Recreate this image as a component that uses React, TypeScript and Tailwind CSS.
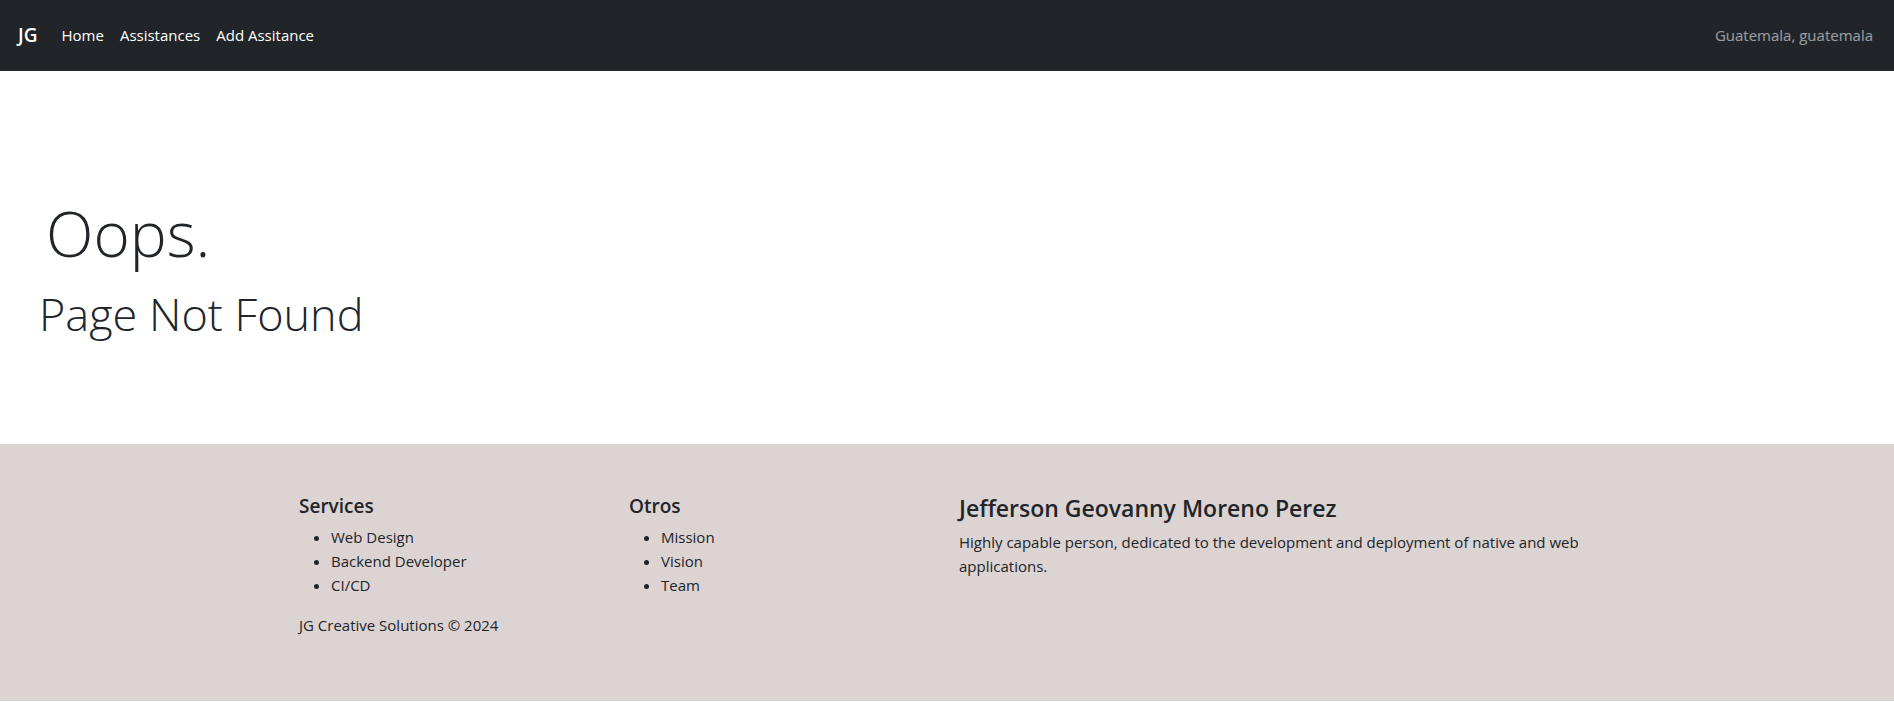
import React from 'react';

const font = { fontFamily: '"Segoe UI", "Open Sans", "Noto Sans", sans-serif' };

const navLinks = ['Home', 'Assistances', 'Add Assitance'];

function Navbar() {
  return (
    <header className="bg-[#212529] h-[71px] flex items-center justify-between pl-[18px] pr-[21px]">
      <div className="flex items-center">
        <a href="#" className="text-white text-[19px] font-semibold mr-[16px]">JG</a>
        <nav className="flex items-center">
          {navLinks.map((link) => (
            <a key={link} href="#" className="text-white text-[15px] px-[8px]">
              {link}
            </a>
          ))}
        </nav>
      </div>
      <span className="text-white/55 text-[15px]">Guatemala, guatemala</span>
    </header>
  );
}

export default function App() {
  return (
    <div style={font} className="text-[#212529] bg-white">
      <Navbar />

      {/* Not found */}
      <main className="h-[373px] flex flex-col justify-center pt-[22px]">
        <h1 className="text-[62px] font-light leading-[1.2] pl-[46px]">Oops.</h1>
        <h2 className="text-[45px] font-light leading-[1.2] pl-[39px] mt-[16px]">Page Not Found</h2>
      </main>

      {/* Footer */}
      <footer className="bg-[#dcd3d3] pt-[50px] pb-[48px]">
        <div className="max-w-[1320px] mx-auto px-[12px] grid grid-cols-12 gap-x-[24px]">
          <div className="col-span-3">
            <h5 className="text-[19px] font-semibold leading-[24px] mb-[7px]">Services</h5>
            <ul className="list-disc pl-[32px] mb-[16px] text-[15px] leading-[24px]">
              <li>Web Design</li>
              <li>Backend Developer</li>
              <li>CI/CD</li>
            </ul>
            <p className="text-[15px] leading-[24px] mb-[16px]">JG Creative Solutions © 2024</p>
          </div>
          <div className="col-span-3">
            <h5 className="text-[19px] font-semibold leading-[24px] mb-[7px]">Otros</h5>
            <ul className="list-disc pl-[32px] text-[15px] leading-[24px]">
              <li>Mission</li>
              <li>Vision</li>
              <li>Team</li>
            </ul>
          </div>
          <div className="col-span-6">
            <h4 className="text-[23px] font-semibold leading-[29px] mb-[7px]">Jefferson Geovanny Moreno Perez</h4>
            <p className="text-[15px] leading-[24px] pr-[8px]">
              Highly capable person, dedicated to the development and deployment of native and web applications.
            </p>
          </div>
        </div>
      </footer>
    </div>
  );
}
